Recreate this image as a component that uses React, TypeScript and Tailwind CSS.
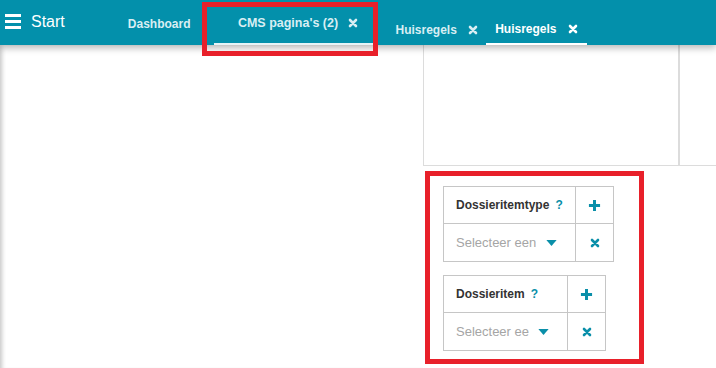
import React from "react";

const teal = "#0390ab";

function Cross({ className = "" }: { className?: string }) {
  return (
    <svg viewBox="0 0 10 10" className={className} fill="none" stroke="currentColor" strokeWidth="2.6" strokeLinecap="round">
      <path d="M2 2 L8 8 M8 2 L2 8" />
    </svg>
  );
}

function Plus({ className = "" }: { className?: string }) {
  return (
    <svg viewBox="0 0 14 14" className={className} fill="none" stroke="currentColor" strokeWidth="3.2">
      <path d="M7 1 V13 M1 7 H13" />
    </svg>
  );
}

function Caret() {
  return (
    <svg viewBox="0 0 12 7" className="h-[6px] w-[11px] text-[#0a8fa9]" fill="currentColor">
      <path d="M0 0 H12 L6 7 Z" />
    </svg>
  );
}

function Field({ label, placeholder, left }: { label: string; placeholder: string; left: string }) {
  return (
    <div className="flex w-fit border border-[#c6c6c6]">
      <div className={`${left} border-r border-[#c6c6c6]`}>
        <div className="flex h-[37px] items-center gap-[6px] border-b border-[#c6c6c6] pl-[12px] text-[12px] font-bold text-[#333]">
          {label}
          <span className="text-[#0a8fa9]">?</span>
        </div>
        <div className="flex h-[37px] items-center justify-between pl-[12px] pr-[18px] text-[13px] text-[#a5a5a5]">
          <span className="overflow-hidden whitespace-nowrap">{placeholder}</span>
          <Caret />
        </div>
      </div>
      <div className="w-[37px]">
        <div className="flex h-[37px] items-center justify-center border-b border-[#c6c6c6] text-[#0a8fa9]">
          <Plus className="h-[13px] w-[13px]" />
        </div>
        <div className="flex h-[37px] items-center justify-center text-[#0a8fa9]">
          <Cross className="h-[10px] w-[10px]" />
        </div>
      </div>
    </div>
  );
}

export default function App() {
  return (
    <div className="relative h-[368px] w-[716px] overflow-hidden bg-white" style={{ fontFamily: '"Liberation Sans", Arial, sans-serif' }}>
      <header className="relative z-10 flex h-[45px] items-stretch shadow-[0_3px_7px_rgba(0,0,0,0.28)]" style={{ backgroundColor: teal }}>
        <div className="flex items-center gap-[10px] pl-[5px] pb-[2px] text-white">
          <div className="flex w-[16px] flex-col gap-[3px]">
            <span className="h-[3px] bg-white" />
            <span className="h-[3px] bg-white" />
            <span className="h-[3px] bg-white" />
          </div>
          <span className="text-[16px]">Start</span>
        </div>
        <div className="ml-[63px] flex items-center pt-[3px] text-[12px] font-bold text-[#d8eef3]">Dashboard</div>
        <div className="ml-[24px] flex w-[159px] items-center justify-center gap-[10px] border-b-2 border-[#e6f3f6] pt-[3px] pl-[8px] text-[12.5px] font-bold text-[#d8eef3]">
          CMS pagina's (2)
          <Cross className="h-[10px] w-[10px]" />
        </div>
        <div className="ml-[22px] flex items-center gap-[11px] pt-[15px] text-[12px] font-bold text-[#d8eef3]">
          Huisregels
          <Cross className="h-[10px] w-[10px]" />
        </div>
        <div className="ml-[8px] flex w-[101px] items-center justify-center gap-[11px] border-b-2 border-white pt-[15px] text-[12px] font-bold text-white">
          Huisregels
          <Cross className="h-[10px] w-[10px]" />
        </div>
      </header>

      <div className="flex h-[323px]">
        <div className="w-[423px] shadow-[inset_5px_0_4px_-3px_rgba(0,0,0,0.22)]" />
        <div className="flex-1">
          <div className="flex h-[121px] border-b border-l border-[#dcdcdc]">
            <div className="w-[256px] border-r-2 border-[#dcdcdc]" />
            <div className="flex-1" />
          </div>
          <div className="flex flex-col gap-[13px] pl-[20px] pt-[20px]">
            <Field label="Dossieritemtype" placeholder="Selecteer een" left="w-[132px]" />
            <Field label="Dossieritem" placeholder="Selecteer ee" left="w-[124px]" />
          </div>
        </div>
      </div>

      <div className="pointer-events-none absolute left-[202px] top-[2px] z-20 h-[54px] w-[176px] border-[5px] border-[#e8202a]" />
      <div className="pointer-events-none absolute left-[425px] top-[171px] z-20 h-[193px] w-[219px] border-[5px] border-[#e8202a]" />
    </div>
  );
}
